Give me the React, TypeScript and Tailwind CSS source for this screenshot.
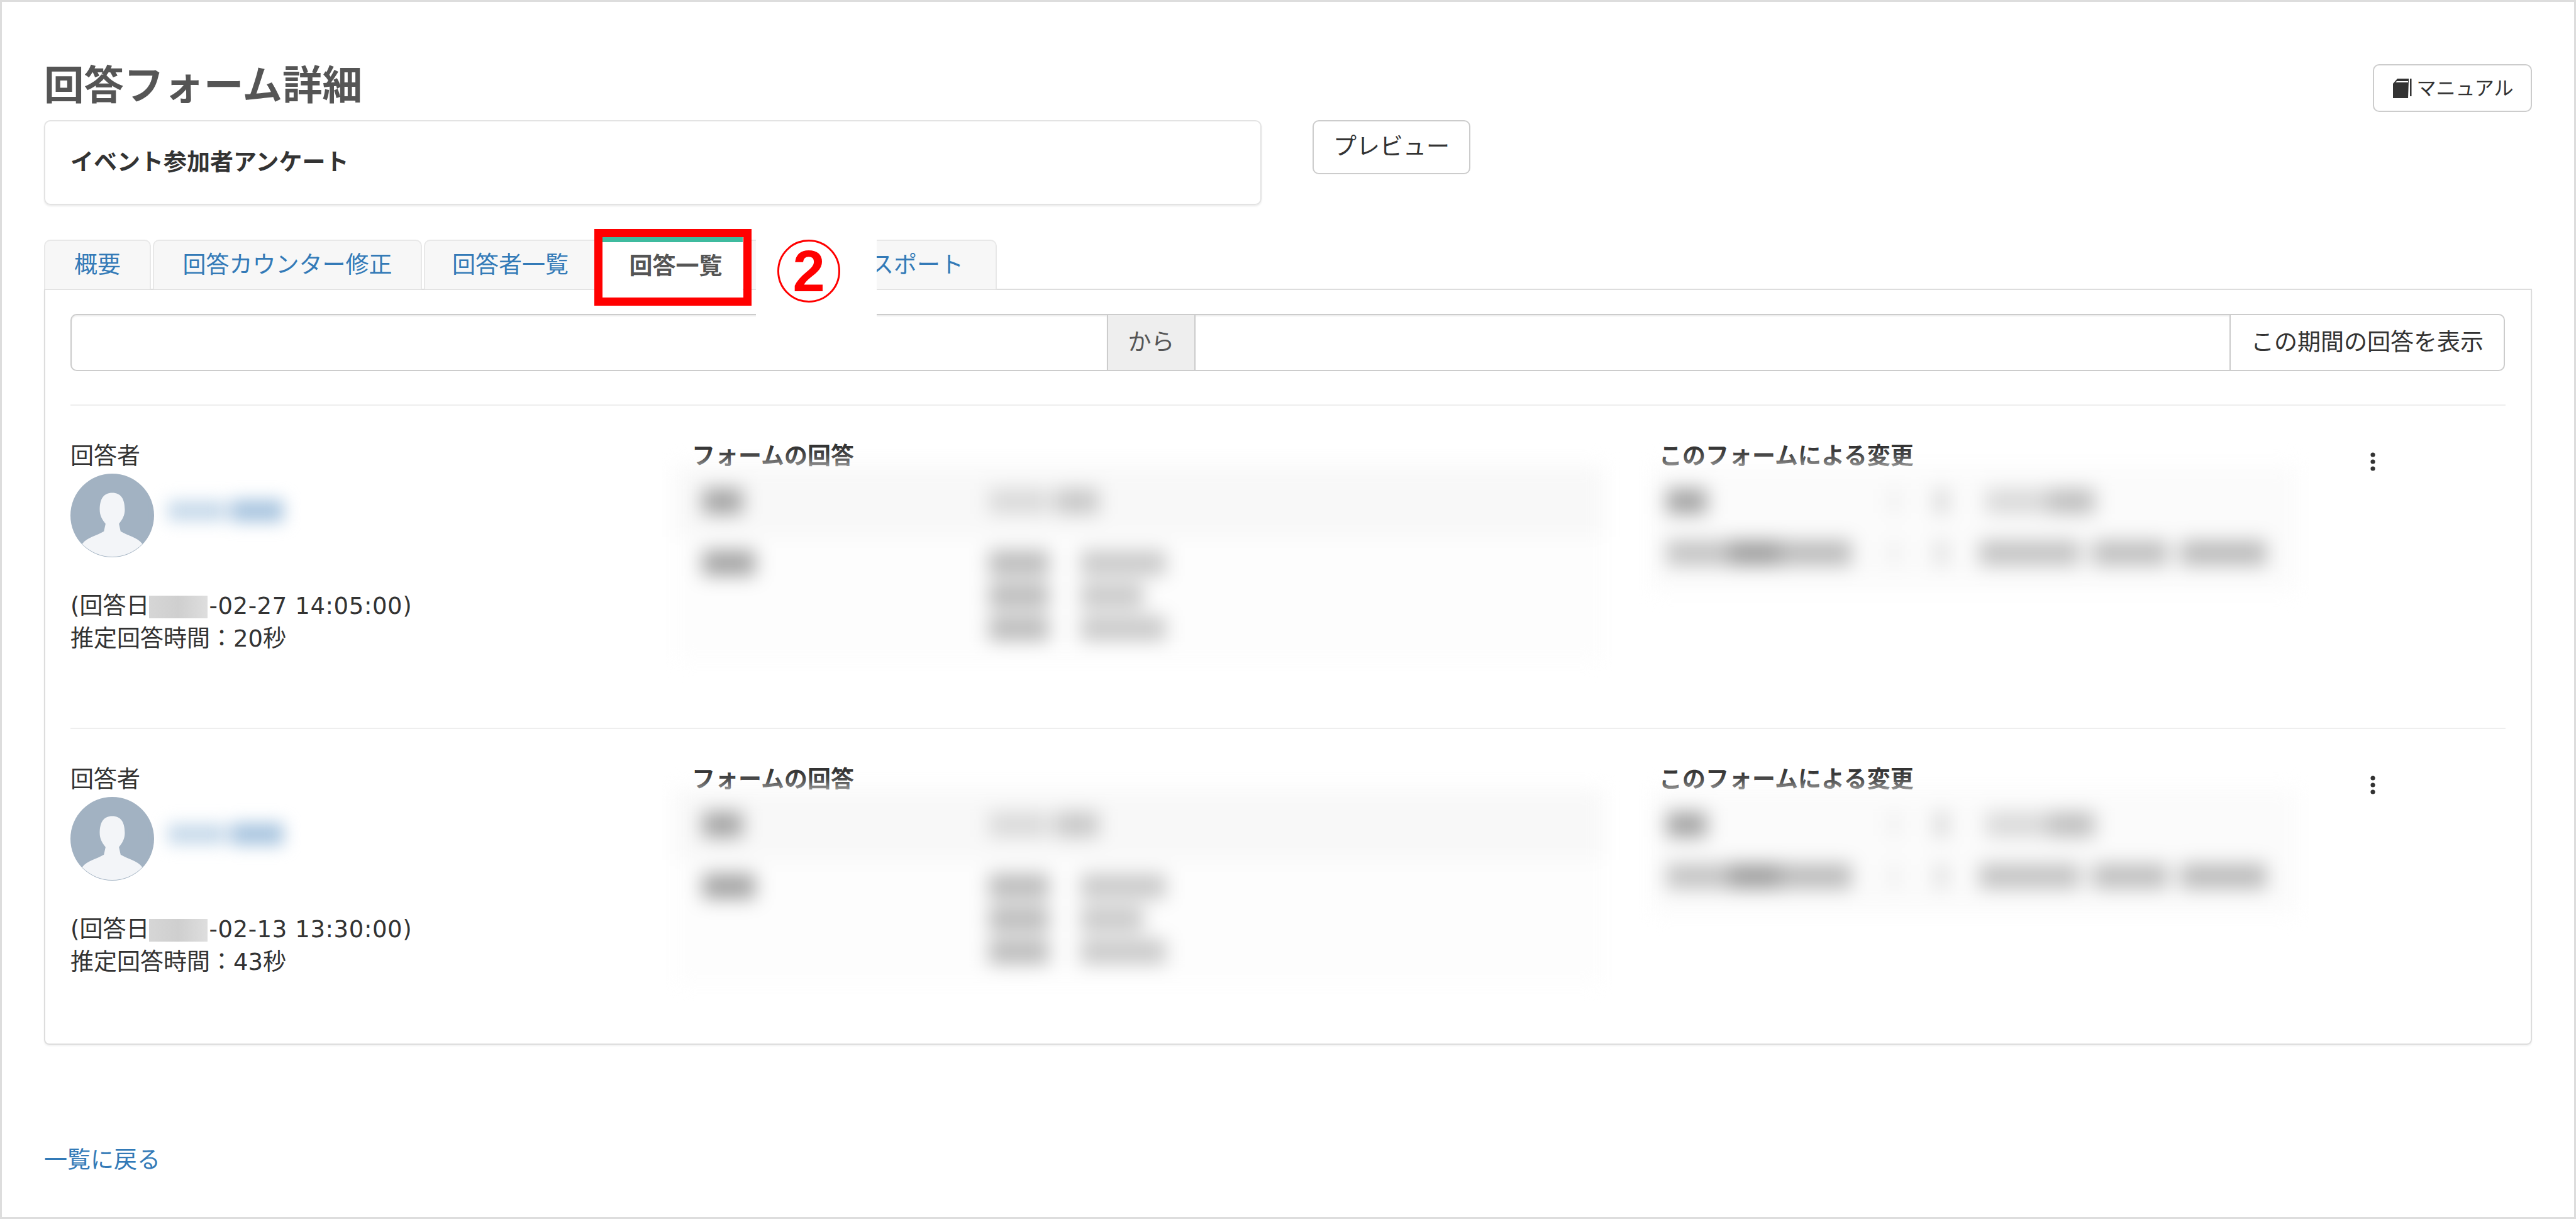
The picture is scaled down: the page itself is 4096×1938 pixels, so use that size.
import React from "react";

function Avatar() {
  return (
    <svg viewBox="0 0 100 100" className="w-[133px] h-[133px] shrink-0">
      <circle cx="50" cy="50" r="50" fill="#a2b2c2" />
      <path
        d="M14 84C20 76 32 74 40 69L42 60C38 55 35 50 35 43C35 30 40 23 50 23C60 23 65 30 65 43C65 50 62 55 58 60L60 69C68 74 80 76 86 84A50 50 0 0 1 14 84Z"
        fill="#f3f5f8"
      />
    </svg>
  );
}

function Kebab() {
  return (
    <svg viewBox="0 0 8 30" className="w-[8px] h-[30px]">
      <circle cx="4" cy="4" r="3.6" fill="#333" />
      <circle cx="4" cy="15" r="3.6" fill="#333" />
      <circle cx="4" cy="26" r="3.6" fill="#333" />
    </svg>
  );
}

function BookIcon() {
  return (
    <svg viewBox="0 0 31 32" className="w-[31px] h-[32px] shrink-0">
      <path d="M0 9L7 1H25V3L24 32H0Z" fill="#333" />
      <path d="M4 7H24V5H6Z" fill="#fff" />
      <rect x="27" y="1" width="2.5" height="28" fill="#333" />
    </svg>
  );
}

function Respondent({ date, seconds }: { date: string; seconds: string }) {
  return (
    <div className="w-[961px] shrink-0">
      <div className="h-[52px] leading-[52px]">回答者</div>
      <div className="flex items-center mt-[1px] h-[133px]">
        <Avatar />
        <div className="flex items-center gap-[8px] ml-[22px] h-[60px] -mt-[16px] blur-[13px]">
          <span className="w-[92px] h-[32px] bg-[#c6d9ea]" />
          <span className="w-[84px] h-[36px] bg-[#aac6e0]" />
        </div>
      </div>
      <div className="mt-[52px] h-[52px] leading-[52px] whitespace-nowrap">
        (回答日
        <span className="inline-block w-[93px] h-[36px] align-middle bg-gradient-to-r from-[#d6d6d6] via-[#cfcfcf] to-[#dedede] mr-[2px] -mt-[2px]" />
        <span className="tracking-[0.6px]">{date}</span>
      </div>
      <div className="h-[52px] leading-[52px]">推定回答時間：{seconds}秒</div>
    </div>
  );
}

function FormAnswers() {
  return (
    <div className="w-[1553px] shrink-0">
      <div className="pl-[27px] h-[41px] leading-[52px] font-bold">フォームの回答</div>
      <div className="w-[1476px] h-[309px] bg-[#fdfdfd] blur-[15px]">
        <div className="flex items-center h-[112px] bg-[#f8f8f8]">
          <div className="w-[499px] pl-[44px] shrink-0">
            <div className="w-[64px] h-[40px] bg-[#a4a4a4]" />
          </div>
          <div className="flex gap-[10px]">
            <div className="w-[95px] h-[40px] bg-[#dadada]" />
            <div className="w-[70px] h-[40px] bg-[#c8c8c8]" />
          </div>
        </div>
        <div className="flex pt-[22px]">
          <div className="w-[499px] pl-[44px] shrink-0">
            <div className="w-[84px] h-[40px] bg-[#a4a4a4]" />
          </div>
          <div className="flex flex-col gap-[12px]">
            {["w-[136px]", "w-[100px]", "w-[136px]"].map((width, i) => (
              <div key={i} className="flex gap-[50px]">
                <div className="w-[96px] h-[40px] bg-[#bcbcbc]" />
                <div className={`${width} h-[40px] bg-[#cacaca]`} />
              </div>
            ))}
          </div>
        </div>
      </div>
    </div>
  );
}

function FormChanges() {
  return (
    <div className="w-[1144px] shrink-0">
      <div className="pl-[12px] h-[41px] leading-[52px] font-bold">このフォームによる変更</div>
      <div className="w-[1025px] h-[197px] pt-[15px] bg-[#fbfbfb] blur-[15px]">
        <div className="flex items-center h-[82px] pl-[24px]">
          <div className="w-[64px] h-[40px] bg-[#a4a4a4]" />
          <div className="w-[16px] h-[36px] bg-[#ececec] ml-[290px]" />
          <div className="w-[20px] h-[40px] bg-[#d4d4d4] ml-[57px]" />
          <div className="w-[100px] h-[40px] bg-[#dadada] ml-[60px]" />
          <div className="w-[74px] h-[40px] bg-[#c0c0c0]" />
        </div>
        <div className="flex items-center h-[82px] pl-[24px]">
          <div className="w-[100px] h-[40px] bg-[#c4c4c4]" />
          <div className="w-[80px] h-[40px] bg-[#a0a0a0]" />
          <div className="w-[114px] h-[40px] bg-[#bcbcbc]" />
          <div className="w-[16px] h-[36px] bg-[#ececec] ml-[60px]" />
          <div className="w-[20px] h-[40px] bg-[#dedede] ml-[57px]" />
          <div className="w-[160px] h-[40px] bg-[#c4c4c4] ml-[50px]" />
          <div className="w-[120px] h-[40px] bg-[#c0c0c0] ml-[20px]" />
          <div className="w-[137px] h-[40px] bg-[#bcbcbc] ml-[20px]" />
        </div>
      </div>
    </div>
  );
}

function ResponseRow({ date, seconds }: { date: string; seconds: string }) {
  return (
    <div className="flex h-[514px] pt-[55px] border-t-2 border-[#eeeeee]">
      <Respondent date={date} seconds={seconds} />
      <FormAnswers />
      <FormChanges />
      <div className="mt-[19px] -ml-[1px]">
        <Kebab />
      </div>
    </div>
  );
}

export default function App() {
  return (
    <div className="relative w-[4096px] h-[1938px] border-[3px] border-[#dddddd] bg-white px-[67px] overflow-hidden text-[#333333] text-[37px] font-['DejaVu_Sans','Noto_Sans_CJK_JP',sans-serif]">
      <div className="flex items-start justify-between h-[188px]">
        <h1 className="mt-[102px] h-[62px] leading-[62px] text-[63.5px] font-bold text-[#555555]">回答フォーム詳細</h1>
        <button className="mt-[99px] w-[253px] h-[76px] pl-[3px] flex items-center justify-center gap-[6px] border-2 border-[#cccccc] rounded-[10px] text-[31px]">
          <BookIcon />
          マニュアル
        </button>
      </div>

      <div className="flex items-start">
        <div className="w-[1936px] h-[135px] pl-[40px] flex items-center font-bold border-2 border-[#e3e3e3] rounded-[10px] shadow-[0_2px_3px_rgba(0,0,0,0.08)]">
          イベント参加者アンケート
        </div>
        <button className="ml-[81px] w-[251px] h-[86px] border-2 border-[#cccccc] rounded-[10px]">プレビュー</button>
      </div>

      <div className="relative z-10 flex items-start gap-[3px] h-[79px] mt-[55px] -mb-[1px] text-[#337ab7]">
        <div className="w-[170px] h-[79px] flex items-center justify-center bg-[#f7f7f7] border-2 border-b-0 border-[#e8e8e8] rounded-t-[10px]">概要</div>
        <div className="w-[428px] h-[79px] flex items-center justify-center bg-[#f7f7f7] border-2 border-b-0 border-[#e8e8e8] rounded-t-[10px]">回答カウンター修正</div>
        <div className="w-[281px] h-[79px] pl-[43px] flex items-center bg-[#f7f7f7] border-2 border-b-0 border-[#e8e8e8] rounded-t-[10px]">回答者一覧</div>
        <div className="w-[223px] h-[85px] -mt-[4px] pl-[10px] pt-[1px] flex items-center justify-center bg-white border-t-[8px] border-[#3fbb9f] font-bold text-[#555555]">回答一覧</div>
        <div className="w-[401px] h-[79px] flex items-center justify-center bg-[#f7f7f7] border-2 border-b-0 border-[#e8e8e8] rounded-t-[10px]">回答エクスポート</div>
      </div>

      <div className="h-[1202px] px-[40px] pt-[38px] border-2 border-[#dddddd] rounded-b-[8px] shadow-[0_2px_3px_rgba(0,0,0,0.06)]">
        <div className="flex h-[91px] mb-[53px]">
          <input className="w-[1648px] border-2 border-r-0 border-[#cccccc] rounded-l-[10px] shadow-[inset_0_2px_2px_rgba(0,0,0,0.07)]" />
          <div className="w-[141px] flex items-center justify-center bg-[#eeeeee] border-2 border-[#cccccc] text-[#555555]">から</div>
          <input className="w-[1644px] border-y-2 border-[#cccccc] shadow-[inset_0_2px_2px_rgba(0,0,0,0.07)]" />
          <button className="w-[438px] border-2 border-[#cccccc] rounded-r-[10px]">この期間の回答を表示</button>
        </div>
        <ResponseRow date="-02-27 14:05:00)" seconds="20" />
        <ResponseRow date="-02-13 13:30:00)" seconds="43" />
      </div>

      <a className="block mt-[158px] h-[52px] leading-[52px] text-[#337ab7]">一覧に戻る</a>

      {/* annotation over the tab bar */}
      <div className="absolute z-20 left-[1199px] top-[351px] w-[192px] h-[158px] bg-white" />
      <div className="absolute z-30 left-[942px] top-[361px] w-[250px] h-[122px] border-[13px] border-[#ff0000]" />
      <div className="absolute z-30 left-[1233px] top-[378px] w-[100px] h-[100px] flex items-center justify-center rounded-full border-[3px] border-[#ff0000] text-[#ff0000] text-[92px] font-bold font-['Liberation_Sans',sans-serif]">
        2
      </div>
    </div>
  );
}
